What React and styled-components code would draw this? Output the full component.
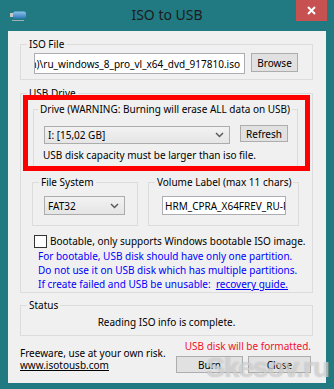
import React from 'react';
import styled, { createGlobalStyle } from 'styled-components';

const Global = createGlobalStyle`
  html, body { margin: 0; padding: 0; }
  body {
    width: 334px; height: 389px; overflow: hidden;
    background: #217a82;
    font-family: "Noto Sans", "Open Sans", sans-serif;
    font-size: 10px; color: #000;
  }
  * { box-sizing: border-box; }
`;

const Window = styled.div`
  position: relative;
  width: 334px; height: 389px;
  display: flex; flex-direction: column;
  background: #217a82;
  overflow: hidden;
`;

const TitleBar = styled.div`
  height: 31px; flex: none;
  display: grid; grid-template-columns: 1fr auto 1fr; align-items: start;
`;

const AppIcon = styled.svg`
  justify-self: start; margin: 11px 0 0 9px; display: block;
`;

const Title = styled.div`
  font-size: 14px; line-height: 20px; margin-top: 5px; color: #1c1c1c;
`;

const CloseBtn = styled.div`
  justify-self: end; margin-right: 7px;
  width: 31px; height: 21px; background: #c75050;
  display: flex; align-items: center; justify-content: center;
`;

const Client = styled.div`
  flex: 1; margin: 0 8px 6px; background: #f0f0f0;
  padding: 13px 13px 0 12px;
  display: flex; flex-direction: column;
`;

const Group = styled.div`
  border: 1px solid #dcdcdc;
  margin-top: ${p => p.$mt || 0}px;
  margin-left: ${p => p.$ml || 0}px;
  width: ${p => (p.$w ? `${p.$w}px` : 'auto')};
  flex: none;
`;

const GroupLabel = styled.div`
  width: fit-content;
  margin: -8px 0 0 ${p => (p.$indent ?? 6)}px;
  padding: 0 2px; line-height: 14px; background: #f0f0f0;
  white-space: nowrap;
`;

const Body = styled.div`
  padding: ${p => p.$pad};
  display: ${p => p.$flex ? 'flex' : 'block'};
  gap: ${p => p.$gap || 0}px;
  align-items: flex-start;
  text-align: ${p => p.$center ? 'center' : 'left'};
`;

const TextBox = styled.div`
  width: ${p => (p.$w ? `${p.$w}px` : 'auto')};
  flex: ${p => (p.$w ? 'none' : '1')};
  height: ${p => p.$h}px;
  border: 1px solid #abadb3; background: #fff;
  display: flex; align-items: center;
  justify-content: ${p => (p.$end ? 'flex-end' : 'flex-start')};
  overflow: hidden; white-space: nowrap;
  padding: 0 ${p => (p.$end ? 4 : 0)}px 0 ${p => (p.$end ? 0 : 2)}px;
  span { flex: none; }
`;

const Button = styled.div`
  width: ${p => p.$w}px; height: ${p => p.$h}px; flex: none;
  border: 1px solid #adadad; background: #e1e1e1;
  display: flex; align-items: center; justify-content: center;
  margin-top: ${p => p.$mt || 0}px;
`;

const Combo = styled.div`
  width: ${p => p.$w}px; height: ${p => p.$h}px; flex: none;
  margin-left: ${p => p.$ml || 0}px;
  border: 1px solid #acacac;
  background: linear-gradient(#f2f2f2, #e5e5e5);
  display: flex; align-items: center; justify-content: space-between;
  padding: 0 5px 0 3px;
`;

const Row = styled.div`
  display: flex; align-items: ${p => p.$align || 'flex-start'};
  gap: ${p => p.$gap || 0}px;
  margin: ${p => p.$m || 0};
`;

const Line = styled.div`
  line-height: ${p => p.$lh || 14}px;
  margin: ${p => p.$m || 0};
  color: ${p => p.$color || '#000'};
  text-align: ${p => (p.$align || 'left')};
  white-space: nowrap;
`;

const Link = styled.span`
  text-decoration: underline;
  color: inherit;
`;

const CheckBox = styled.div`
  width: 13px; height: 13px; flex: none;
  border: 1px solid #333; background: #fff;
`;

const BlueText = styled.div`
  color: #0000ff; line-height: 14px; margin: 1px 0 1px 17px;
  white-space: nowrap;
`;

const Footer = styled.div`
  display: flex; justify-content: space-between; align-items: flex-start;
  padding-right: 2px;
`;

const FooterLeft = styled.div`
  margin-top: 11px;
`;

const FooterRight = styled.div`
  display: flex; flex-direction: column; align-items: flex-end;
  margin-top: 3px;
`;

const Highlight = styled.div`
  position: absolute; left: 2px; top: 1px;
  width: 287px; height: 76px;
  border: 5px solid #ff0000;
  pointer-events: none;
`;

const UsbGroup = styled(Group)`
  position: relative;
`;

const Watermark = styled.div`
  position: absolute; right: 5px; bottom: 7px;
  font-family: "Liberation Sans", Arial, sans-serif;
  font-weight: bold; font-size: 28px; line-height: 28px;
  letter-spacing: -1px;
  color: rgba(255, 255, 255, 0.5);
  text-shadow: 0 0 1px rgba(110, 110, 110, 0.55);
  pointer-events: none;
`;

const Chevron = () => (
  <svg width="9" height="6" viewBox="0 0 9 6">
    <polyline points="1,1 4.5,4.5 8,1" fill="none" stroke="#5a5a5a" strokeWidth="1.5" />
  </svg>
);

export default function App() {
  return (
    <>
      <Global />
      <Window>
        <TitleBar>
          <AppIcon width="18" height="11" viewBox="0 0 18 11">
            <defs>
              <linearGradient id="usbg" x1="0" y1="0" x2="0" y2="1">
                <stop offset="0" stopColor="#8cc4ee" />
                <stop offset="1" stopColor="#2c78b8" />
              </linearGradient>
            </defs>
            <rect x="1" y="2" width="4" height="4" fill="#c8c8c8" />
            <rect x="4" y="0.5" width="13" height="7" rx="2" fill="url(#usbg)" />
            <rect x="3" y="9" width="12" height="1" fill="#9ab0b4" />
          </AppIcon>
          <Title>ISO to USB</Title>
          <CloseBtn>
            <svg width="9" height="9" viewBox="0 0 9 9">
              <path d="M1 1 L8 8 M8 1 L1 8" stroke="#fff" strokeWidth="2" />
            </svg>
          </CloseBtn>
        </TitleBar>
        <Client>
          <Group>
            <GroupLabel>ISO File</GroupLabel>
            <Body $pad="2px 14px 5px 13px" $flex $gap={6}>
              <TextBox $w={211} $h={21} $end>
                <span>C:\Users\Admin\Downloads\Windows 8 (Russian)\ru_windows_8_pro_vl_x64_dvd_917810.iso</span>
              </TextBox>
              <Button $w={47} $h={19}>Browse</Button>
            </Body>
          </Group>

          <UsbGroup $mt={13}>
            <GroupLabel>USB Drive</GroupLabel>
            <Group $mt={9} $ml={12} $w={265}>
              <GroupLabel $indent={4}>Drive (WARNING: Burning will erase ALL data on USB)</GroupLabel>
              <Body $pad="10px 9px 4px 10px">
                <Row $gap={10}>
                  <Combo $w={186} $h={18}>
                    <span>I: [15,02 GB]</span>
                    <Chevron />
                  </Combo>
                  <Button $w={48} $h={17} $mt={-1}>Refresh</Button>
                </Row>
                <Line $m="4px 0 0 -1px">USB disk capacity must be larger than iso file.</Line>
              </Body>
            </Group>

            <Row $gap={10} $m="15px 0 0 11px">
              <Group $w={106}>
                <GroupLabel>File System</GroupLabel>
                <Body $pad="7px 0 10px 11px">
                  <Combo $w={81} $h={19}>
                    <span>FAT32</span>
                    <Chevron />
                  </Combo>
                </Body>
              </Group>
              <Group $w={151}>
                <GroupLabel>Volume Label (max 11 chars)</GroupLabel>
                <Body $pad="7px 12px 10px 13px" $flex>
                  <TextBox $h={19}>
                    <span>HRM_CPRA_X64FREV_RU-RU_DV5</span>
                  </TextBox>
                </Body>
              </Group>
            </Row>

            <Row $align="center" $gap={3} $m="8px 0 0 13px">
              <CheckBox />
              <Line>Bootable, only supports Windows bootable ISO image.</Line>
            </Row>
            <BlueText>
              <div>For bootable, USB disk should have only one partition.</div>
              <div>Do not use it on USB disk which has multiple partitions.</div>
              <div>If create failed and USB be unusable:&nbsp;&nbsp;<Link>recovery guide.</Link></div>
            </BlueText>
            <Highlight />
          </UsbGroup>

          <Group $mt={12}>
            <GroupLabel>Status</GroupLabel>
            <Body $pad="3px 0 6px 0">
              <Line $align="center">Reading ISO info is complete.</Line>
            </Body>
          </Group>

          <Footer>
            <FooterLeft>
              <Line $lh={12}>Freeware, use at your own risk.</Line>
              <Line $lh={12}><Link>www.isotousb.com</Link></Line>
            </FooterLeft>
            <FooterRight>
              <Line $color="#f0102a" $align="right">USB disk will be formatted.</Line>
              <Row $gap={5} $m="3px 0 0 0">
                <Button $w={67} $h={17}>Burn</Button>
                <Button $w={63} $h={17}>Close</Button>
              </Row>
            </FooterRight>
          </Footer>
        </Client>
        <Watermark>Skesov.ru</Watermark>
      </Window>
    </>
  );
}
